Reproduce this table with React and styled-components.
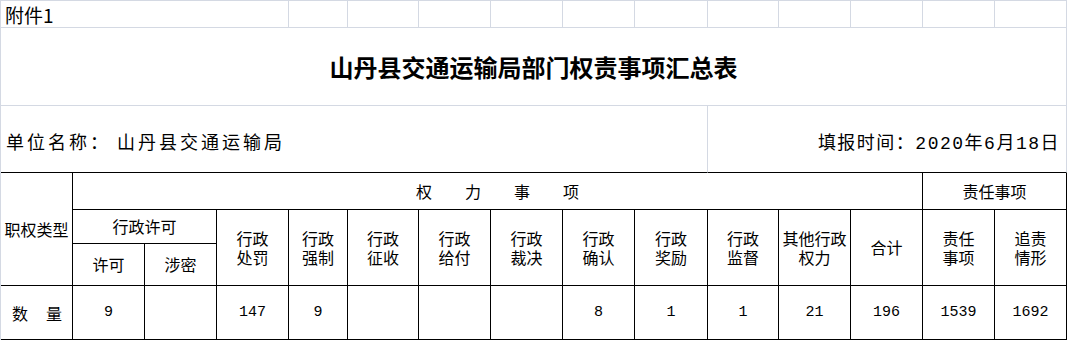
import React from 'react';
import styled, { createGlobalStyle } from 'styled-components';

const GRID = '#d4d9e3';
const INK = '#000';

const GlobalStyle = createGlobalStyle`
	html, body {
		margin: 0;
		padding: 0;
		background: #fff;
	}
	body {
		font-family: 'Noto Sans CJK SC', sans-serif;
		color: #000;
	}
`

const Sheet = styled.div`
	display: grid;
	grid-template-columns: 72px 72px 72px 72px 59px 71px 72px 72px 72px 73px 71px 72px 72px 72px 72px;
	grid-template-rows: 27px 78px 67px 37px 34px 42px 54px;
	width: fit-content;
	border-left: 1px solid ${GRID};
	border-top: 1px solid ${GRID};
`

const Cell = styled.div`
	box-sizing: border-box;
	grid-column: ${({col}) => col};
	grid-row: ${({row}) => row};
	display: flex;
	align-items: center;
	justify-content: ${({align}) => align || 'center'};
	text-align: center;
	border-right: 1px solid ${({r}) => r || GRID};
	border-bottom: 1px solid ${({b}) => b || GRID};
	overflow: hidden;
	white-space: nowrap;
`

const Attach = styled.span`
	font-size: 19px;
	padding-left: 4px;
	line-height: 1;
`

const Title = styled.h1`
	margin: 0;
	font-size: 24px;
	font-weight: 700;
	letter-spacing: 0;
	line-height: 1;
`

const InfoText = styled.span`
	font-family: 'Liberation Mono', 'Noto Sans CJK SC', monospace;
	font-size: 18px;
	letter-spacing: ${({right}) => right ? '1.5px' : '3px'};
	padding: ${({right}) => right ? '3px 6px 0 0' : '3px 0 0 5px'};
`

const InfoValue = styled.span`
	margin-left: 6px;
`

const Head = styled.span`
	font-size: 16px;
	line-height: 19px;
	white-space: pre-line;
`

const Spread = styled.span`
	display: flex;
	gap: ${({gap}) => gap}px;
	font-size: 16px;
	padding-left: ${({shift}) => shift || 0}px;
`

const Num = styled.span`
	font-family: 'Liberation Mono', monospace;
	font-size: 15px;
`

const tailCols = [5, 6, 7, 8, 9, 10, 11, 12, 13, 14, 15];

const headers = [
	{ col: 4, text: '行政\n处罚' },
	{ col: 5, text: '行政\n强制' },
	{ col: 6, text: '行政\n征收' },
	{ col: 7, text: '行政\n给付' },
	{ col: 8, text: '行政\n裁决' },
	{ col: 9, text: '行政\n确认' },
	{ col: 10, text: '行政\n奖励' },
	{ col: 11, text: '行政\n监督' },
	{ col: 12, text: '其他行政\n权力' },
	{ col: 13, text: '合计' },
	{ col: 14, text: '责任\n事项' },
	{ col: 15, text: '追责\n情形' },
];

const counts = ['9', '', '147', '9', '', '', '', '8', '1', '1', '21', '196', '1539', '1692'];

export default function App() {
	return (
		<>
			<GlobalStyle />
			<Sheet>
				<Cell col="1 / 5" row="1" align="flex-start">
					<Attach>附件1</Attach>
				</Cell>
				{tailCols.map(c => <Cell key={c} col={`${c}`} row="1" />)}

				<Cell col="1 / 16" row="2">
					<Title>山丹县交通运输局部门权责事项汇总表</Title>
				</Cell>

				<Cell col="1 / 11" row="3" align="flex-start" b={INK}>
					<InfoText>单位名称：<InfoValue>山丹县交通运输局</InfoValue></InfoText>
				</Cell>
				<Cell col="11 / 16" row="3" align="flex-end" b={INK}>
					<InfoText right>填报时间：2020年6月18日</InfoText>
				</Cell>

				<Cell col="1" row="4 / 7" r={INK} b={INK}>
					<Head>职权类型</Head>
				</Cell>
				<Cell col="2 / 14" row="4" r={INK} b={INK}>
					<Spread gap={33}>
						<span>权</span><span>力</span><span>事</span><span>项</span>
					</Spread>
				</Cell>
				<Cell col="14 / 16" row="4" r={INK} b={INK}>
					<Head>责任事项</Head>
				</Cell>
				<Cell col="2 / 4" row="5" r={INK} b={INK}>
					<Head>行政许可</Head>
				</Cell>
				<Cell col="2" row="6" r={INK} b={INK}>
					<Head>许可</Head>
				</Cell>
				<Cell col="3" row="6" r={INK} b={INK}>
					<Head>涉密</Head>
				</Cell>
				{headers.map(h => (
					<Cell key={h.col} col={`${h.col}`} row="5 / 7" r={INK} b={INK}>
						<Head>{h.text}</Head>
					</Cell>
				))}

				<Cell col="1" row="7" r={INK} b={INK}>
					<Spread gap={18} shift={1}>
						<span>数</span><span>量</span>
					</Spread>
				</Cell>
				{counts.map((n, i) => (
					<Cell key={i} col={`${i + 2}`} row="7" r={INK} b={INK}>
						<Num>{n}</Num>
					</Cell>
				))}
			</Sheet>
		</>
	);
}
